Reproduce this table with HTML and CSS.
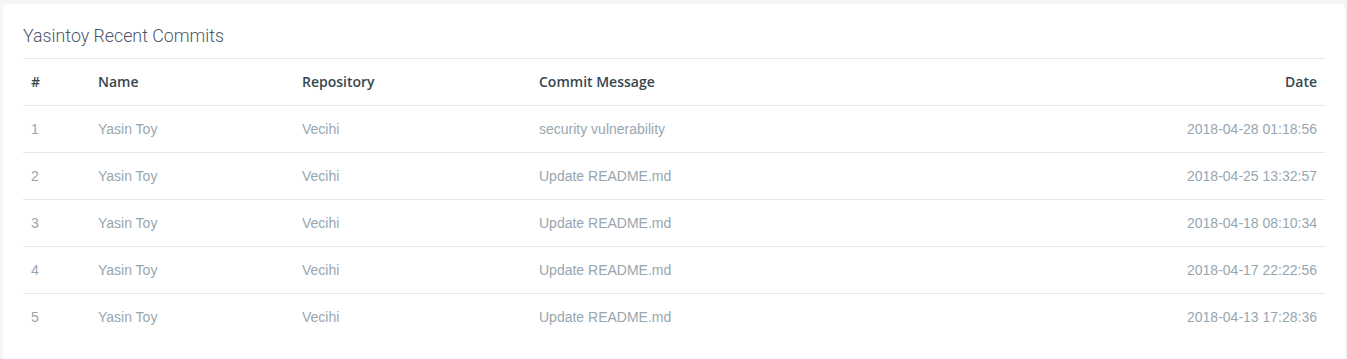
FILE: index.html
```html
<!DOCTYPE html>
<html lang="en">
<head>
  <meta charset="UTF-8" />
  <title>Yasintoy Recent Commits</title>
  <link rel="stylesheet" href="styles.css">
</head>
<body>
  <div class="card">
    <h4 class="card-title">Yasintoy Recent Commits</h4>
    <table class="commits">
      <thead>
        <tr>
          <th class="col-num">#</th>
          <th class="col-name">Name</th>
          <th class="col-repo">Repository</th>
          <th>Commit Message</th>
          <th class="col-date">Date</th>
        </tr>
      </thead>
      <tbody>
        <tr><td>1</td><td>Yasin Toy</td><td>Vecihi</td><td>security vulnerability</td><td class="col-date">2018-04-28 01:18:56</td></tr>
        <tr><td>2</td><td>Yasin Toy</td><td>Vecihi</td><td>Update README.md</td><td class="col-date">2018-04-25 13:32:57</td></tr>
        <tr><td>3</td><td>Yasin Toy</td><td>Vecihi</td><td>Update README.md</td><td class="col-date">2018-04-18 08:10:34</td></tr>
        <tr><td>4</td><td>Yasin Toy</td><td>Vecihi</td><td>Update README.md</td><td class="col-date">2018-04-17 22:22:56</td></tr>
        <tr><td>5</td><td>Yasin Toy</td><td>Vecihi</td><td>Update README.md</td><td class="col-date">2018-04-13 17:28:36</td></tr>
      </tbody>
    </table>
  </div>
</body>
</html>
```

FILE: styles.css
```css
* { box-sizing: border-box; margin: 0; padding: 0; }
body {
  background-color: #f5f5f5;
  font-family: 'Liberation Sans', Arial, sans-serif;
  padding: 4px 2px 0 3px;
}

.card {
  background: #fff;
  border-radius: 5px;
  padding: 21px 20px 30px;
}
.card-title {
  font-family: Roboto, sans-serif;
  font-weight: 300;
  font-size: 17.8px;
  line-height: 22px;
  color: #4c5667;
  margin-bottom: 11px;
}

.commits {
  width: 100%;
  border-collapse: collapse;
}
.commits th,
.commits td {
  text-align: left;
  padding: 14px 8px;
  line-height: 18px;
  border-top: 1px solid #e3e6ea;
}
.commits th {
  font-family: 'Open Sans', sans-serif;
  font-weight: 600;
  font-size: 14px;
  color: #36474f;
}
.commits td {
  font-size: 14px;
  color: #98a6b0;
}
.commits .col-num { width: 67px; }
.commits .col-name { width: 204px; }
.commits .col-repo { width: 237px; }
.commits .col-date { text-align: right; }
```
